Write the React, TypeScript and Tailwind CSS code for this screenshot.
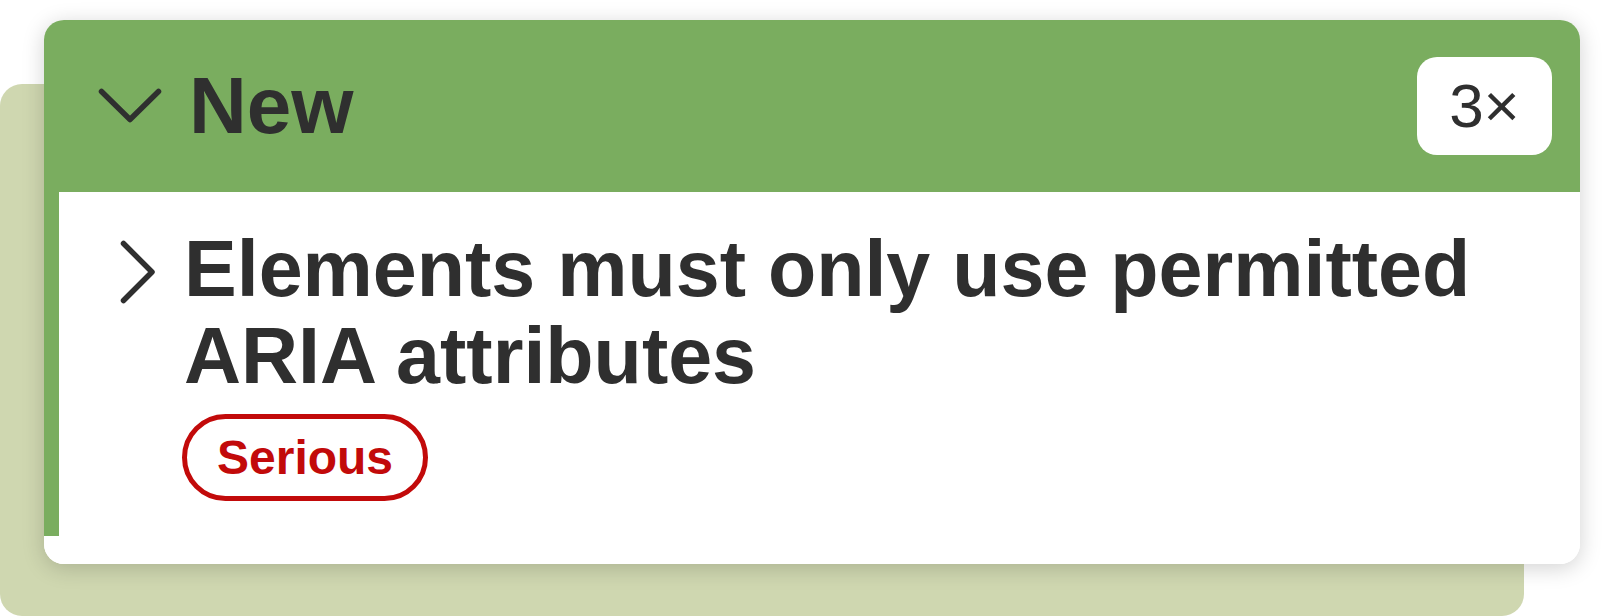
const GREEN = "bg-[#7aad5f]";

function ChevronDown() {
  return (
    <svg width="64" height="36" viewBox="0 0 64 36" fill="none" className="shrink-0">
      <polyline
        points="3.5,3.5 32,31.5 60.5,3.5"
        stroke="#2f2f2f"
        strokeWidth="5.5"
        strokeLinecap="round"
        strokeLinejoin="round"
      />
    </svg>
  );
}

function ChevronRight() {
  return (
    <svg width="36" height="64" viewBox="0 0 36 64" fill="none" className="shrink-0 mt-[15px]">
      <polyline
        points="3.5,3.5 32,32 3.5,60.5"
        stroke="#2f2f2f"
        strokeWidth="5.5"
        strokeLinecap="round"
        strokeLinejoin="round"
      />
    </svg>
  );
}

export default function App() {
  return (
    <div
      className="relative h-[616px] w-[1608px] overflow-hidden bg-white pt-[20px] pl-[44px]"
      style={{ fontFamily: '"Liberation Sans", Arial, sans-serif' }}
    >
      {/* olive panel behind the card */}
      <div className="absolute left-0 top-[84px] h-[532px] w-[1524px] rounded-[22px] bg-[#cfd7b0]" />

      <div className="relative flex h-[544px] w-[1536px] flex-col overflow-hidden rounded-[20px] bg-white shadow-[0_4px_22px_rgba(0,0,0,0.18)]">
        {/* Group header */}
        <div className={`${GREEN} flex h-[172px] shrink-0 items-center justify-between pl-[54px] pr-[28px]`}>
          <div className="flex items-center gap-[27px]">
            <ChevronDown />
            <span className="text-[80px] font-bold leading-none text-[#2f2f2f]">New</span>
          </div>
          <div className="flex h-[98px] w-[135px] items-center justify-center rounded-[20px] bg-white">
            <span className="text-[62px] leading-none text-[#2f2f2f]">3×</span>
          </div>
        </div>

        {/* Issue row */}
        <div className="flex h-[344px] shrink-0">
          <div className={`${GREEN} w-[15px] shrink-0`} />
          <div className="flex flex-1 items-start gap-[28px] pl-[61px] pt-[33px]">
            <ChevronRight />
            <div className="flex flex-col items-start">
              <h3 className="text-[79px] font-bold leading-[87px] text-[#2f2f2f]">
                Elements must only use permitted
                <br />
                ARIA attributes
              </h3>
              <span className="mt-[15px] ml-[-2px] flex h-[87px] items-center rounded-full border-[5px] border-[#c20a0a] px-[30px] text-[48px] font-bold leading-none text-[#c20a0a]">
                Serious
              </span>
            </div>
          </div>
        </div>
        <div className="flex-1 bg-white" />
      </div>
    </div>
  );
}
